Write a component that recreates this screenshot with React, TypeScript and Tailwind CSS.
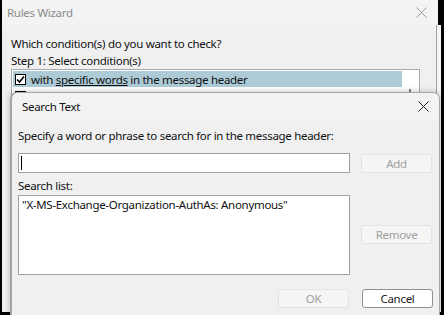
import React from "react";

const font = { fontFamily: '"Noto Sans", "Open Sans", sans-serif' };

const CloseIcon = ({ color, size = 11 }: { color: string; size?: number }) => (
  <svg width={size} height={size} viewBox="0 0 11 11" fill="none">
    <path d="M0.5 0.5 L10.5 10.5 M10.5 0.5 L0.5 10.5" stroke={color} strokeWidth="1" />
  </svg>
);

const Check = () => (
  <div className="w-[11px] h-[11px] border border-black bg-white flex items-center justify-center shrink-0">
    <svg width="9" height="9" viewBox="0 0 9 9" fill="none">
      <path d="M1 4.5 L3.5 7 L8 1.5" stroke="#000" strokeWidth="1.6" />
    </svg>
  </div>
);

const Btn = ({ label, disabled }: { label: string; disabled?: boolean }) => (
  <div
    className={
      "w-[71px] h-[19px] rounded-[3px] border flex items-center justify-center text-[11.5px] " +
      (disabled
        ? "border-[#e3e3e3] bg-[#f5f5f5] text-[#a0a0a0]"
        : "border-[#8f8f8f] bg-white text-[#1a1a1a]")
    }
  >
    {label}
  </div>
);

export default function App() {
  return (
    <div
      className="relative w-[444px] h-[315px] bg-black overflow-hidden tracking-[-0.3px]"
      style={font}
    >
      {/* Rules Wizard window behind */}
      <div className="absolute left-[2px] top-0 w-[436px] h-[312px] bg-[#f0f0f0]">
        <div className="h-[25px] bg-[#f3f3f3] flex items-center justify-between pl-[5px] pr-[11px]">
          <span className="text-[11.5px] text-[#8a8a8a]">Rules Wizard</span>
          <CloseIcon color="#9a9a9a" />
        </div>
        <div className="pl-[9px] pt-[10px] text-[11.5px] text-[#111] leading-[17px]">
          <div>Which condition(s) do you want to check?</div>
          <div>Step 1: Select condition(s)</div>
          <div className="w-[409px] h-[60px] border border-[#a9a9a9] bg-white p-[1px] flex">
            <div className="flex-1 flex flex-col">
              <div className="h-[16px] bg-[#adcbd6] flex items-center gap-[5px] pl-[2px]">
                <Check />
                <span>
                  with <span className="underline">specific words</span> in the message header
                </span>
              </div>
              <div className="h-[16px] flex items-center gap-[5px] pl-[2px] mt-[1px]">
                <Check />
                <span>where my name is in the To or Cc box</span>
              </div>
            </div>
            <div className="w-[16px] relative">
              <div className="absolute left-[7px] top-[18px] w-[2px] h-[4px] bg-[#808080]" />
            </div>
          </div>
        </div>
      </div>

      {/* strip at right edge */}
      <div className="absolute left-[436px] top-[25px] w-[5px] h-[287px] bg-[#f5f5f5] border-l border-[#a0a0a0]" />

      {/* Search Text dialog */}
      <div className="absolute left-[10px] top-[92px] w-[430px] h-[224px] bg-[#f0f0f0] border border-[#a6a6a6] border-l-2 rounded-t-[7px] shadow-[0_0_6px_rgba(0,0,0,0.25)] text-[11.5px] text-[#111]">
        <div className="h-[27px] bg-[#f3f3f3] rounded-t-[7px] flex items-center justify-between pl-[10px] pr-[10px]">
          <span>Search Text</span>
          <CloseIcon color="#222" />
        </div>
        <div className="pl-[6px] pt-[8px] leading-[16px]">
          <div>Specify a word or phrase to search for in the message header:</div>
          <div className="mt-[9px] flex gap-[11px] items-start">
            <div className="w-[332px] h-[20px] border border-[#a0a0a0] bg-white flex items-center pl-[2px]">
              <div className="w-[1px] h-[14px] bg-black" />
            </div>
            <div className="mt-[1px]">
              <Btn label="Add" disabled />
            </div>
          </div>
          <div className="mt-[5px]">Search list:</div>
          <div className="mt-[1px] flex gap-[11px] items-start">
            <div className="w-[332px] h-[80px] border border-[#a0a0a0] bg-white pl-[3px] pt-[1px]">
              "X-MS-Exchange-Organization-AuthAs: Anonymous"
            </div>
            <div className="mt-[30px]">
              <Btn label="Remove" disabled />
            </div>
          </div>
          <div className="mt-[14px] flex justify-end gap-[13px] pr-[6px]">
            <Btn label="OK" disabled />
            <Btn label="Cancel" />
          </div>
        </div>
      </div>
    </div>
  );
}
